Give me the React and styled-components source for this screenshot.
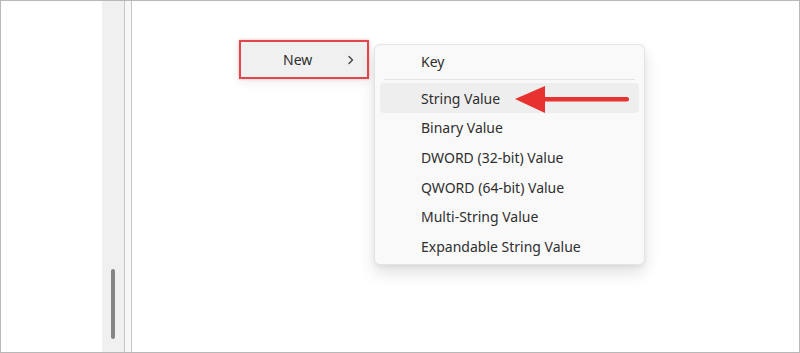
import React from "react";
import styled, { createGlobalStyle } from "styled-components";

const Global = createGlobalStyle`
  html, body { margin: 0; padding: 0; background: #fff; }
  * { box-sizing: border-box; }
`;

const Frame = styled.div`
  width: 800px;
  height: 353px;
  border: 1px solid #b8b8b8;
  display: flex;
  background: #fff;
  font-family: "Noto Sans", "Segoe UI", sans-serif;
  overflow: hidden;
`;

const LeftPane = styled.div`
  width: 101px;
  background: #fff;
`;

const Track = styled.div`
  width: 22px;
  background: #f0f0f0;
  display: flex;
  flex-direction: column;
  justify-content: flex-end;
  align-items: center;
  padding-bottom: 13px;
`;

const Thumb = styled.div`
  width: 4px;
  height: 70px;
  border-radius: 2px;
  background: #858585;
`;

const Divider = styled.div`
  width: 8px;
  border-left: 1px solid #c6c6c6;
  border-right: 1px solid #c6c6c6;
  background: #f7f7f7;
`;

const Main = styled.div`
  flex: 1;
  display: flex;
  align-items: flex-start;
  padding: 39px 0 0 107px;
  gap: 5px;
`;

const NewItem = styled.div`
  width: 130px;
  height: 39px;
  border: 2px solid #e2474d;
  background: #f0f0f0;
  display: flex;
  align-items: center;
  padding: 0 12px 0 42px;
  font-size: 14px;
  color: #2e2e2e;
  box-shadow: 0 0 3px rgba(226, 71, 77, 0.35), 0 4px 10px rgba(0, 0, 0, 0.06);
`;

const NewLabel = styled.span`
  flex: 1;
`;

const SubMenu = styled.div`
  position: relative;
  margin-top: 4px;
  width: 271px;
  padding: 1px 5px 3px;
  background: #f9f9f9;
  border: 1px solid #e4e4e4;
  border-radius: 6px;
  box-shadow: 0 8px 16px rgba(0, 0, 0, 0.12), 0 2px 4px rgba(0, 0, 0, 0.05);
`;

const Row = styled.div`
  height: ${(p) => (p.$tall ? 30 : 29.7)}px;
  display: flex;
  align-items: center;
  padding-left: 41px;
  border-radius: 4px;
  font-size: 14px;
  color: #2f2f2f;
  background: ${(p) => (p.$active ? "#eeeeee" : "transparent")};
`;

const KeyRow = styled(Row)`
  height: 30px;
`;

const Separator = styled.div`
  height: 1px;
  margin: 3px 4px 3px;
  background: #e3e3e3;
`;

const Arrow = styled.svg`
  position: absolute;
  left: 140px;
  top: 40px;
`;

const Chevron = () => (
  <svg width="8" height="10" viewBox="0 0 8 10">
    <path d="M2 1.5 L5.5 5 L2 8.5" fill="none" stroke="#444" strokeWidth="1.4" strokeLinecap="round" strokeLinejoin="round" />
  </svg>
);

const items = [
  "Binary Value",
  "DWORD (32-bit) Value",
  "QWORD (64-bit) Value",
  "Multi-String Value",
  "Expandable String Value",
];

export default function App() {
  return (
    <>
      <Global />
      <Frame>
        <LeftPane />
        <Track>
          <Thumb />
        </Track>
        <Divider />
        <Main>
          <NewItem>
            <NewLabel>New</NewLabel>
            <Chevron />
          </NewItem>
          <SubMenu>
            <KeyRow>Key</KeyRow>
            <Separator />
            <Row $active $tall>String Value</Row>
            {items.map((t) => (
              <Row key={t}>{t}</Row>
            ))}
            <Arrow width="120" height="30" viewBox="0 0 120 30">
              <polygon points="0,14 30,1 30,28" fill="#e8322f" />
              <rect x="28" y="12" width="86" height="4.5" rx="2" fill="#e8322f" />
            </Arrow>
          </SubMenu>
        </Main>
      </Frame>
    </>
  );
}
